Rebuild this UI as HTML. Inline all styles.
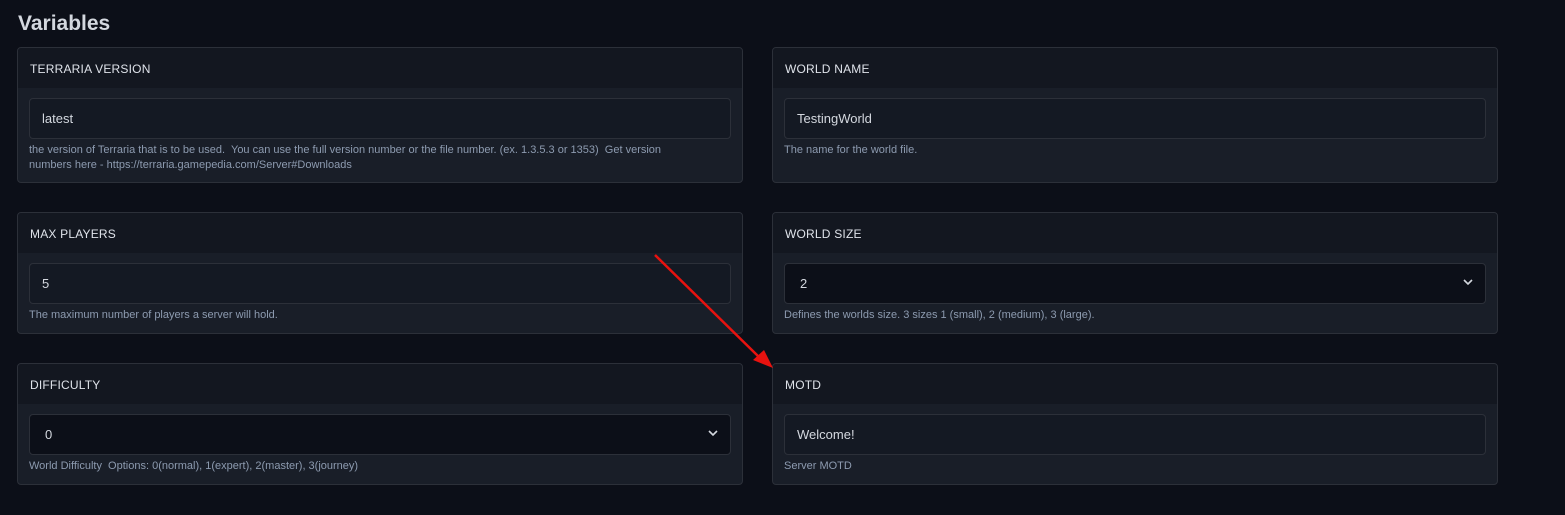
<!DOCTYPE html>
<html><head><meta charset="utf-8"><style>
*{box-sizing:border-box;margin:0;padding:0}
body{width:1565px;height:515px;background:#0c0f18;font-family:"Liberation Sans",sans-serif;position:relative;overflow:hidden}
h1{position:absolute;left:18px;top:12px;font-size:21px;font-weight:bold;color:#d4d8df}
.card{position:absolute;width:726px;border:1px solid #2c3039;border-radius:4px;background:#191e28;overflow:hidden}
.hd{height:40px;background:#131720;color:#dfe3ea;font-size:12px;padding:14px 12px;letter-spacing:.2px}
.in{position:absolute;left:11px;right:11px;top:50px;height:41px;border:1px solid #2c3039;border-radius:4px;background:#141923;color:#d4d8df;font-size:13px;padding:12px 12px}
.in.sel{background:#0c0f18;padding-left:15px}
.chev{position:absolute;right:12px;top:14px}
.help{position:absolute;left:11px;top:95px;font-size:11px;line-height:15px;color:#8d9bb0;width:672px}
</style></head><body>
<h1>Variables</h1>

<div class="card" style="left:17px;top:47px;height:136px"><div class="hd">TERRARIA VERSION</div><div class="in">latest</div><div class="help">the version of Terraria that is to be used.&nbsp; You can use the full version number or the file number. (ex. 1.3.5.3 or 1353)&nbsp; Get version numbers here - https://terraria.gamepedia.com/Server#Downloads</div></div>
<div class="card" style="left:772px;top:47px;height:136px"><div class="hd">WORLD NAME</div><div class="in">TestingWorld</div><div class="help">The name for the world file.</div></div>

<div class="card" style="left:17px;top:212px;height:122px"><div class="hd">MAX PLAYERS</div><div class="in">5</div><div class="help">The maximum number of players a server will hold.</div></div>
<div class="card" style="left:772px;top:212px;height:122px"><div class="hd">WORLD SIZE</div><div class="in sel">2<svg class="chev" width="10" height="8" viewBox="0 0 10 8"><path d="M1 2l4 4 4-4" stroke="#d4d8df" stroke-width="1.6" fill="none"/></svg></div><div class="help">Defines the worlds size. 3 sizes 1 (small), 2 (medium), 3 (large).</div></div>

<div class="card" style="left:17px;top:363px;height:122px"><div class="hd">DIFFICULTY</div><div class="in sel">0<svg class="chev" width="10" height="8" viewBox="0 0 10 8"><path d="M1 2l4 4 4-4" stroke="#d4d8df" stroke-width="1.6" fill="none"/></svg></div><div class="help">World Difficulty&nbsp; Options: 0(normal), 1(expert), 2(master), 3(journey)</div></div>
<div class="card" style="left:772px;top:363px;height:122px"><div class="hd">MOTD</div><div class="in">Welcome!</div><div class="help">Server MOTD</div></div>

<svg style="position:absolute;left:0;top:0" width="1565" height="515"><line x1="655" y1="255" x2="760" y2="358" stroke="#e8120f" stroke-width="2.5"/><polygon points="773,368 753,360 764,350" fill="#e8120f"/></svg>
</body></html>
